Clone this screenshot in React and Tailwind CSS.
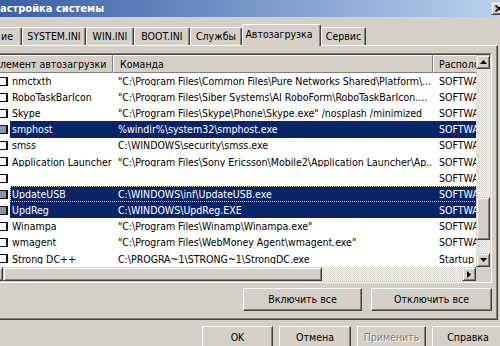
import React from 'react';

const rows = [
  { name: 'nmctxth', cmd: '"C:\\Program Files\\Common Files\\Pure Networks Shared\\Platform\\...', loc: 'SOFTWARE' },
  { name: 'RoboTaskBarIcon', cmd: '"C:\\Program Files\\Siber Systems\\AI RoboForm\\RoboTaskBarIcon....', loc: 'SOFTWARE' },
  { name: 'Skype', cmd: '"C:\\Program Files\\Skype\\Phone\\Skype.exe" /nosplash /minimized', loc: 'SOFTWARE' },
  { name: 'smphost', cmd: '%windir%\\system32\\smphost.exe', loc: 'SOFTWARE', sel: true },
  { name: 'smss', cmd: 'C:\\WINDOWS\\security\\smss.exe', loc: 'SOFTWARE' },
  { name: 'Application Launcher', cmd: '"C:\\Program Files\\Sony Ericsson\\Mobile2\\Application Launcher\\Ap...', loc: 'SOFTWARE' },
  { name: '', cmd: '', loc: 'SOFTWARE' },
  { name: 'UpdateUSB', cmd: 'C:\\WINDOWS\\inf\\UpdateUSB.exe', loc: 'SOFTWARE', sel: true, focus: true },
  { name: 'UpdReg', cmd: 'C:\\WINDOWS\\UpdReg.EXE', loc: 'SOFTWARE', sel: true },
  { name: 'Winampa', cmd: '"C:\\Program Files\\Winamp\\Winampa.exe"', loc: 'SOFTWARE' },
  { name: 'wmagent', cmd: '"C:\\Program Files\\WebMoney Agent\\wmagent.exe"', loc: 'SOFTWARE' },
  { name: 'Strong DC++', cmd: 'C:\\PROGRA~1\\STRONG~1\\StrongDC.exe', loc: 'Startup' },
];

const tabs = [
  { label: 'ие', w: 'w-[22px]', first: true },
  { label: 'SYSTEM.INI', w: 'w-[64px]' },
  { label: 'WIN.INI', w: 'w-[48px]' },
  { label: 'BOOT.INI', w: 'w-[56px]' },
  { label: 'Службы', w: 'w-[52px]' },
  { label: 'Автозагрузка', w: 'w-[79px]', active: true },
  { label: 'Сервис', w: 'w-[45px]' },
];

const raised =
  'border border-t-[#d4d0c8] border-l-[#d4d0c8] border-r-[#404040] border-b-[#404040] shadow-[inset_1px_1px_#ffffff,inset_-1px_-1px_#808080] bg-[#d4d0c8]';
const track = 'bg-[repeating-conic-gradient(#d4d0c8_0%_25%,#ffffff_0%_50%)] bg-[length:2px_2px]';

function Arrow({ dir }) {
  const pts = {
    up: '0,4 3.5,0 7,4',
    down: '0,0 3.5,4 7,0',
    left: '4,0 0,3.5 4,7',
    right: '0,0 4,3.5 0,7',
  }[dir];
  const vertical = dir === 'up' || dir === 'down';
  return (
    <svg width={vertical ? 7 : 4} height={vertical ? 4 : 7} viewBox={vertical ? '0 0 7 4' : '0 0 4 7'}>
      <polygon points={pts} fill="#000" />
    </svg>
  );
}

function ScrollButton({ dir, className = '' }) {
  return (
    <div className={`${raised} w-[14px] h-[14px] shrink-0 flex items-center justify-center ${className}`}>
      <Arrow dir={dir} />
    </div>
  );
}

function Button({ children, w, disabled }) {
  return (
    <div
      className={`${w} h-[23px] shrink-0 flex items-center justify-center border border-t-white border-l-white border-r-[#404040] border-b-[#404040] shadow-[inset_-1px_-1px_#808080] ${
        disabled ? 'text-[#808080] [text-shadow:1px_1px_#ffffff]' : ''
      }`}
    >
      {children}
    </div>
  );
}

export default function App() {
  return (
    <div className="w-[500px] h-[346px] overflow-hidden bg-[#d4d0c8] text-black text-[10.5px] leading-none [font-family:'DejaVu_Sans',sans-serif] [font-stretch:condensed]">
      {/* caption */}
      <div className="h-[17px] flex items-center bg-linear-to-r from-[#3b5fa5] to-[#b8d1ed]">
        <span className="text-white font-bold text-[11px] whitespace-nowrap">астройка системы</span>
        <div className={`ml-auto mr-[-7px] w-[16px] h-[13px] ${raised} flex items-center justify-center`}>
          <svg width="8" height="7" viewBox="0 0 8 7">
            <path d="M0.5 0.5 L7.5 6.5 M7.5 0.5 L0.5 6.5" stroke="#000" strokeWidth="1.6" />
          </svg>
        </div>
      </div>

      {/* tabs */}
      <div className="flex items-end h-[21px] mt-[7px] relative z-10">
        {tabs.map((t) => (
          <div
            key={t.label}
            className={`${t.w} shrink-0 flex items-center justify-center border-t border-t-white border-r border-r-[#404040] shadow-[inset_-1px_0_#808080] rounded-tr-[2px] whitespace-nowrap ${
              t.first ? 'justify-start pl-[1px]' : 'border-l border-l-white rounded-tl-[2px]'
            } ${t.active ? 'h-[22px] mb-[-1px] bg-[#d4d0c8] pb-[2px] pr-[5px]' : 'h-[18px]'}`}
          >
            {t.label}
          </div>
        ))}
      </div>

      {/* tab page */}
      <div className="ml-[-18px] w-[516px] h-[275px] border border-t-white border-l-white border-r-[#404040] border-b-[#404040] shadow-[inset_-1px_-1px_#808080] pt-[7px] flex flex-col">
        <div className="ml-[4px] w-[505px] h-[230px] border border-t-[#808080] border-l-[#808080] border-r-white border-b-white">
          <div className="h-full border border-t-[#404040] border-l-[#404040] border-r-[#d4d0c8] border-b-[#d4d0c8] bg-white flex flex-col">
            <div className="flex h-[212px]">
              <div className="flex-1 min-w-0 overflow-hidden flex flex-col">
                {/* header */}
                <div className="h-[18px] shrink-0 flex bg-[#d4d0c8] whitespace-nowrap">
                  <div className="w-[124px] shrink-0 pl-[11px] flex items-center border-t border-t-white border-r border-r-[#808080] border-b border-b-[#808080]">
                    лемент автозагрузки
                  </div>
                  <div className="w-[320px] shrink-0 pl-[6px] flex items-center border-t border-t-white border-l border-l-white border-r border-r-[#808080] border-b border-b-[#808080]">
                    Команда
                  </div>
                  <div className="w-[120px] shrink-0 pl-[5px] flex items-center border-t border-t-white border-l border-l-white border-b border-b-[#808080]">
                    Расположение
                  </div>
                </div>
                {/* rows */}
                {rows.map((r, i) => (
                  <div key={i} className="h-[16.17px] shrink-0 flex items-center whitespace-nowrap">
                    <div className="w-[21px] shrink-0 flex items-center">
                      <div
                        className={`ml-[10px] w-[9px] h-[9px] border border-[#111] shadow-[inset_-1px_0_#111] ${
                          r.sel ? 'bg-[#8b93b5]' : 'bg-white'
                        }`}
                      />
                    </div>
                    <div
                      className={`flex-1 h-full flex items-center ${
                        r.sel ? 'bg-[#0a246a] text-white' : ''
                      } ${r.focus ? 'outline-1 outline-dotted outline-[#d9d3a0] -outline-offset-1' : ''}`}
                    >
                      <div className="w-[103px] shrink-0 pl-[2px] overflow-hidden">{r.name}</div>
                      <div className="w-[320px] shrink-0 pl-[5px] overflow-hidden">{r.cmd}</div>
                      <div className="w-[120px] shrink-0 pl-[6px] overflow-hidden">{r.loc}</div>
                    </div>
                  </div>
                ))}
              </div>
              {/* vertical scrollbar */}
              <div className="w-[14px] shrink-0 flex flex-col">
                <ScrollButton dir="up" />
                <div className={`h-[128px] ${track}`} />
                <div className={`h-[43px] ${raised}`} />
                <div className={`h-[13px] ${track}`} />
                <ScrollButton dir="down" />
              </div>
            </div>
            {/* horizontal scrollbar */}
            <div className="h-[14px] flex">
              <ScrollButton dir="left" />
              <div className={`w-[319px] h-[14px] shrink-0 ${raised}`} />
              <div className={`flex-1 ${track}`} />
              <ScrollButton dir="right" />
              <div className="w-[14px] shrink-0 bg-[#d4d0c8]" />
            </div>
          </div>
        </div>
        <div className="flex justify-end gap-[9px] mt-[5px] pr-[5px]">
          <Button w="w-[119px]">Включить все</Button>
          <Button w="w-[121px]">Отключить все</Button>
        </div>
      </div>

      {/* dialog buttons */}
      <div className="flex gap-[6px] pl-[202px] mt-[6px]">
        <Button w="w-[71px]">OK</Button>
        <Button w="w-[72px]">Отмена</Button>
        <Button w="w-[69px]" disabled>
          Применить
        </Button>
        <Button w="w-[72px]">Справка</Button>
      </div>
    </div>
  );
}
